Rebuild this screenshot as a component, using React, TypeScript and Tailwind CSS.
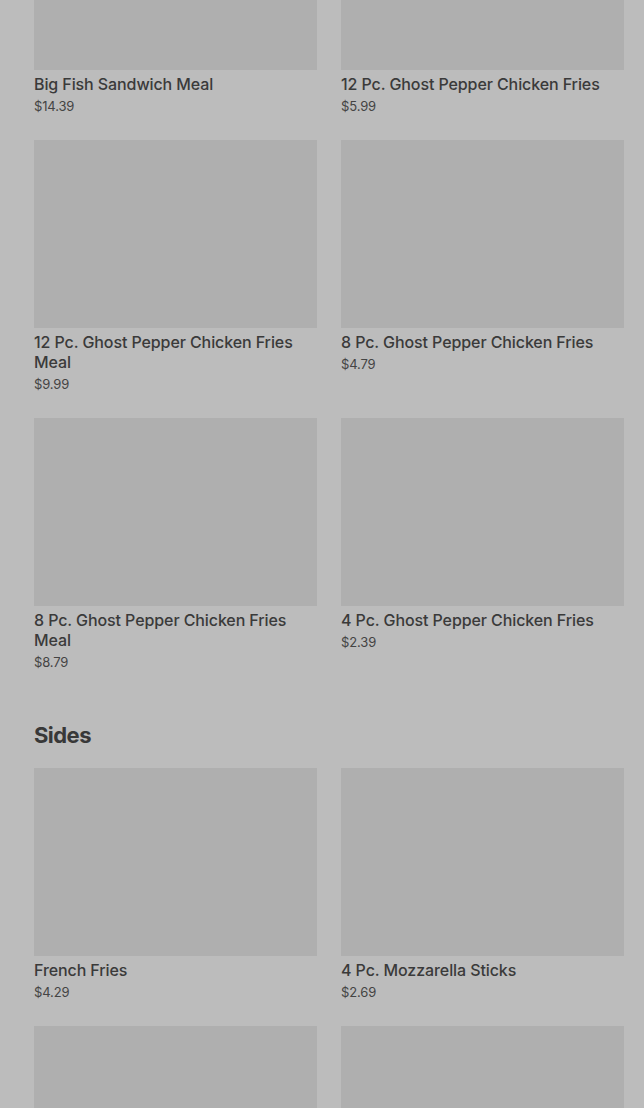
const mains = [
  { name: "Big Fish Sandwich Meal", price: "$14.39" },
  { name: "12 Pc. Ghost Pepper Chicken Fries", price: "$5.99" },
  { name: "12 Pc. Ghost Pepper Chicken Fries Meal", price: "$9.99" },
  { name: "8 Pc. Ghost Pepper Chicken Fries", price: "$4.79" },
  { name: "8 Pc. Ghost Pepper Chicken Fries Meal", price: "$8.79" },
  { name: "4 Pc. Ghost Pepper Chicken Fries", price: "$2.39" },
];

const sides = [
  { name: "French Fries", price: "$4.29" },
  { name: "4 Pc. Mozzarella Sticks", price: "$2.69" },
  { name: "Onion Rings", price: "$3.19" },
  { name: "Mac n' Cheese", price: "$2.99" },
];

type Item = { name: string; price: string };

const ItemCard = ({ name, price }: Item) => (
  <div className="flex flex-col">
    <div className="h-[188px] w-full bg-[#afafaf]" />
    <h3 className="mt-1 text-base font-medium leading-5 tracking-[-0.006em] text-[#3a3a3a]">
      {name}
    </h3>
    <p className="mt-[2px] text-[13px] leading-5 tracking-[-0.01em] text-[#444]">
      {price}
    </p>
  </div>
);

const Grid = ({ items }: { items: Item[] }) => (
  <div className="grid grid-cols-2 gap-x-6 gap-y-6">
    {items.map((item) => (
      <ItemCard key={item.name} {...item} />
    ))}
  </div>
);

export default function App() {
  return (
    <main
      className="h-[1108px] overflow-hidden bg-[#bcbcbc] pl-[34px] pr-5"
      style={{ fontFamily: "Inter, 'Liberation Sans', sans-serif" }}
    >
      <div className="-mt-[118px]">
        <Grid items={mains} />
        <h2 className="mt-[49px] mb-[19px] text-[22px] font-bold leading-7 tracking-tight text-[#383838]">
          Sides
        </h2>
        <Grid items={sides} />
      </div>
    </main>
  );
}
